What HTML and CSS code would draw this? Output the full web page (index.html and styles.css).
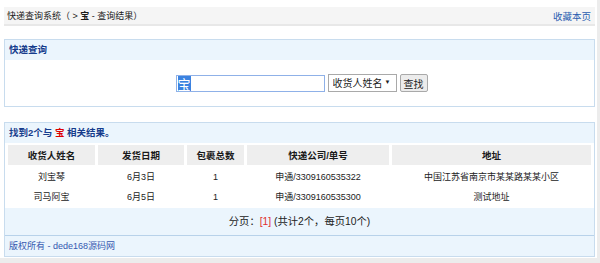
FILE: index.html
```html
<!DOCTYPE html>
<html lang="zh-CN">
<head>
  <meta charset="UTF-8">
  <title>快递查询系统 - 查询结果</title>
  <link rel="stylesheet" href="styles.css">
</head>
<body>
  <div class="page">
    <div class="topbar">
      <span>快递查询系统（ &gt; <b>宝</b> - 查询结果）</span>
      <a href="#" class="fav">收藏本页</a>
    </div>

    <div class="box">
      <div class="box-title">快递查询</div>
      <form class="search">
        <input type="text" id="kw" class="kw" value="宝">
        <span class="field-wrap">
          <select class="field">
            <option>收货人姓名</option>
          </select>
        </span>
        <button type="button" class="btn">查找</button>
      </form>
    </div>

    <div class="box result">
      <div class="box-title">找到2个与 <em>宝</em> 相关结果。</div>
      <table class="list">
        <thead>
          <tr>
            <th class="c1">收货人姓名</th>
            <th class="c2">发货日期</th>
            <th class="c3">包裹总数</th>
            <th class="c4">快递公司/单号</th>
            <th>地址</th>
          </tr>
        </thead>
        <tbody>
          <tr>
            <td>刘宝琴</td>
            <td>6月3日</td>
            <td>1</td>
            <td>申通/3309160535322</td>
            <td>中国江苏省南京市某某路某某小区</td>
          </tr>
          <tr>
            <td>司马阿宝</td>
            <td>6月5日</td>
            <td>1</td>
            <td>申通/3309160535300</td>
            <td>测试地址</td>
          </tr>
        </tbody>
      </table>
      <div class="pager">分页：<span class="cur">[1]</span> (共计2个，每页10个)</div>
      <div class="footer">版权所有 - dede168源码网</div>
    </div>
  </div>

  <script>
    var kw = document.getElementById("kw");
    kw.focus();
    kw.select();
  </script>
</body>
</html>
```

FILE: styles.css
```css
body {
  margin: 0;
  background: #ececec;
  font-family: "Liberation Sans", "Noto Sans CJK SC", sans-serif;
  font-size: 9px;
  color: #222;
}

.page {
  width: 591px;
  height: 251px;
  background: #fff;
  padding: 7px 2px 0 4px;
}

.topbar {
  display: flex;
  justify-content: space-between;
  align-items: center;
  height: 17px;
  padding: 0 4px 0 3px;
  background: #f5f5f5;
  border-bottom: 2px solid #e8e8e8;
  color: #1a1a1a;
}

.topbar b {
  font-weight: bold;
}

.fav {
  font-size: 9.5px;
  color: #2a5db0;
  text-decoration: none;
}

.box {
  margin-top: 13px;
  border: 1px solid #c8dcee;
}

.box-title {
  height: 20px;
  line-height: 20px;
  padding-left: 4px;
  background: #ebf5fd;
  font-size: 9.5px;
  font-weight: bold;
  color: #163c8c;
}

.box-title em {
  font-style: normal;
  color: #d00;
}

.search {
  display: flex;
  justify-content: center;
  align-items: center;
  gap: 3px;
  height: 46px;
  padding-left: 4px;
  margin: 0;
}

.kw {
  width: 145px;
  height: 15px;
  padding: 0 1px;
  margin: 0;
  border: 1px solid #8fb1e8;
  outline: none;
  font: inherit;
  font-size: 13px;
}

.kw::selection {
  background: #3b82e0;
  color: #fff;
}

.field-wrap {
  position: relative;
  display: inline-block;
}

.field-wrap::after {
  content: "▼";
  position: absolute;
  right: 6px;
  top: 5px;
  font-size: 6px;
  color: #222;
  pointer-events: none;
}

.field {
  appearance: none;
  -webkit-appearance: none;
  width: 69px;
  height: 18px;
  padding: 0 0 0 4px;
  margin: 0;
  border: 1px solid #a9a9a9;
  border-radius: 0;
  background: #fff;
  font: inherit;
  font-size: 10px;
  color: #222;
}

.btn {
  height: 18px;
  padding: 0 3px;
  margin: 0;
  border: 1px solid #a9a9a9;
  border-radius: 2px;
  background: #ececec;
  font: inherit;
  font-size: 10px;
  color: #222;
}

.result {
  margin-top: 15px;
}

.list {
  width: 100%;
  border-spacing: 3px;
  margin-top: -1px;
}

.list th {
  height: 20px;
  padding: 0;
  background: #eeeeee;
  font-size: 9.5px;
  font-weight: bold;
  color: #1a1a1a;
}

.list td {
  height: 17px;
  padding: 0;
  text-align: center;
}

.c1 { width: 87px; }
.c2 { width: 86px; }
.c3 { width: 57px; }
.c4 { width: 142px; }

.pager {
  height: 27px;
  line-height: 27px;
  text-align: center;
  background: #ebf5fd;
  border-bottom: 1px solid #b8d2ea;
  font-size: 10.3px;
}

.cur {
  color: #e03030;
}

.footer {
  height: 20px;
  line-height: 20px;
  padding-left: 4px;
  background: #ebf5fd;
  color: #3558b0;
}
```
